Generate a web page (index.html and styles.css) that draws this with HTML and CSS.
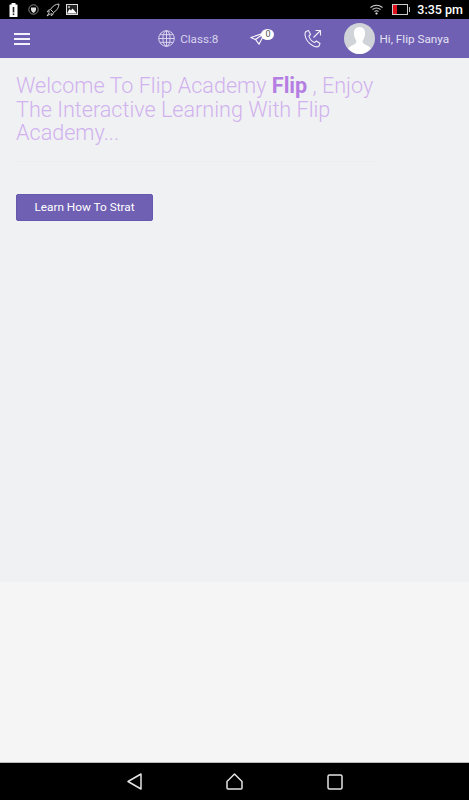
FILE: index.html
```html
<!DOCTYPE html>
<html lang="en">

<head>
    <meta charset="UTF-8">
    <meta name="viewport" content="width=device-width, initial-scale=1.0">
    <title>Flip Academy</title>
    <link rel="stylesheet" href="styles.css">
</head>

<body>
    <div class="app">
        <div class="status-bar">
            <div class="status-left">
                <svg class="status-icon" width="9" height="14" viewBox="0 0 9 14">
                    <rect x="2.5" y="0" width="4" height="2" fill="#fff" />
                    <rect x="0.5" y="1.5" width="8" height="12.5" rx="0.5" fill="#fff" />
                    <rect x="3.7" y="4" width="1.6" height="5.5" fill="#222" />
                    <rect x="3.7" y="10.5" width="1.6" height="1.6" fill="#222" />
                </svg>
                <svg class="status-icon icon-shield" width="11" height="11" viewBox="0 0 11 11">
                    <circle cx="5.5" cy="5.5" r="4.7" fill="none" stroke="#888" stroke-width="1" />
                    <path d="M3 3.5 H8 V6 Q7.5 8 5.5 9 Q3.5 8 3 6 Z" fill="#ddd" />
                </svg>
                <svg class="status-icon icon-rocket" width="14" height="14" viewBox="0 0 14 14">
                    <path d="M13 1 C9.5 1.2 6.5 3 4.5 6.5 L7.5 9.5 C11 7.5 12.8 4.5 13 1 Z M4.5 6.5 L2 7.5 L1.5 9 L4 8.8 M7.5 9.5 L6.5 12 L5 12.5 L5.2 10 M3 10 L1 13 L4 11" fill="none" stroke="#ccc" stroke-width="1" />
                </svg>
                <svg class="status-icon icon-image" width="12" height="11" viewBox="0 0 12 11">
                    <rect x="0.5" y="0.5" width="11" height="10" fill="#222" stroke="#ddd" stroke-width="1" />
                    <path d="M1 9.5 L3.5 5 L5 6.5 L6.5 4.5 L11 9.5 Z" fill="#fff" />
                    <circle cx="3" cy="3" r="1" fill="#ccc" />
                </svg>
            </div>
            <div class="status-right">
                <svg width="13" height="11" viewBox="0 0 13 11">
                    <path d="M0.5 3.5 Q6.5 -1 12.5 3.5 M2.5 5.5 Q6.5 2.5 10.5 5.5 M4.5 7.5 Q6.5 6 8.5 7.5" fill="none" stroke="#d4d4d4" stroke-width="1.1" />
                    <circle cx="6.5" cy="9.5" r="1.1" fill="#eee" />
                </svg>
                <div class="battery">
                    <div class="battery-level"></div>
                </div>
                <span class="clock">3:35 pm</span>
            </div>
        </div>

        <div class="topbar">
            <div class="menu-btn">
                <span></span>
                <span></span>
                <span></span>
            </div>
            <div class="topbar-right">
                <div class="class-item">
                    <svg width="17" height="17" viewBox="0 0 17 17" fill="none" stroke="#d9d4ee" stroke-width="1">
                        <circle cx="8.5" cy="8.5" r="7.8" />
                        <ellipse cx="8.5" cy="8.5" rx="3.6" ry="7.8" />
                        <path d="M8.5 0.7 V16.3 M0.7 8.5 H16.3 M1.8 4.7 H15.2 M1.8 12.3 H15.2" />
                    </svg>
                    <span>Class:8</span>
                </div>
                <div class="send-item">
                    <svg width="16" height="13" viewBox="0 0 16 13" fill="none" stroke="#fff" stroke-width="1.1" stroke-linejoin="round">
                        <path d="M15 0.8 L0.8 5.5 L5.5 7.5 L9 12.2 Z M5.5 7.5 L15 0.8" />
                    </svg>
                    <span class="badge">0</span>
                </div>
                <svg class="call-icon" width="18" height="19" viewBox="0 0 18 19" fill="none" stroke="#f1effa" stroke-width="1.1" stroke-linejoin="round">
                    <path d="M2 2.5 L4.5 1.5 L6.5 5.5 L5 7 C5.5 9.5 8 12.5 10.5 13.5 L12.5 12 L16 14.5 L15 17 C13.5 18.2 11 18 8.5 16.5 C4.5 14 1.5 9.5 1 6 C0.9 4.5 1.2 3.3 2 2.5 Z" />
                    <path d="M9.5 8.5 L16.5 1.5 M11.5 1.5 H16.5 V6.5" />
                </svg>
                <div class="user-item">
                    <div class="avatar">
                        <svg width="31" height="31" viewBox="0 0 31 31">
                            <circle cx="15.5" cy="15.5" r="15.5" fill="#d0d3d8" />
                            <path d="M15.5 4 C19.5 4 21.5 7 21 11.5 C20.7 14.5 19.5 16.5 18.5 18 C18.5 20 20 21 23 22.5 C25 23.5 26 24.5 27 25.5 C24 29 20 31 15.5 31 C11 31 7 29 4 25.5 C5 24.5 6 23.5 8 22.5 C11 21 12.5 20 12.5 18 C11.5 16.5 10.3 14.5 10 11.5 C9.5 7 11.5 4 15.5 4 Z" fill="#fff" />
                        </svg>
                    </div>
                    <span>Hi, Flip Sanya</span>
                </div>
            </div>
        </div>

        <div class="content">
            <div class="welcome">
                <h2>Welcome To Flip Academy <b>Flip</b> , Enjoy The Interactive Learning With Flip Academy...</h2>
                <hr>
                <button class="button">Learn How To Strat</button>
            </div>
        </div>
        <div class="footer-space"></div>

        <div class="bottom-nav">
            <svg width="15" height="17" viewBox="0 0 15 17" fill="none" stroke="#e4e4e4" stroke-width="1.5" stroke-linejoin="round">
                <path d="M14 1 V16 L1 8.5 Z" />
            </svg>
            <svg width="17" height="17" viewBox="0 0 17 17" fill="none" stroke="#e4e4e4" stroke-width="1.5" stroke-linejoin="round">
                <path d="M8.5 1 L16 8.5 V15 Q16 16 15 16 H2 Q1 16 1 15 V8.5 Z" />
            </svg>
            <svg width="16" height="16" viewBox="0 0 16 16" fill="none" stroke="#e4e4e4" stroke-width="1.5">
                <rect x="1" y="1" width="14" height="14" rx="1.5" />
            </svg>
        </div>
    </div>
</body>

</html>
```

FILE: styles.css
```css
body,
html {
    margin: 0;
    padding: 0;
    font-family: Roboto, "Liberation Sans", sans-serif;
    height: 100%;
    overflow: hidden;
}

.app {
    display: flex;
    flex-direction: column;
    height: 800px;
    width: 469px;
    background-color: #f5f5f5;
}

.status-bar {
    display: flex;
    justify-content: space-between;
    align-items: center;
    flex: 0 0 19px;
    background-color: black;
    color: white;
}

.status-left {
    display: flex;
    align-items: center;
    padding-left: 9px;
}

.status-icon {
    display: block;
}

.icon-shield {
    margin-left: 10px;
}

.icon-rocket {
    margin-left: 7px;
}

.icon-image {
    margin-left: 6px;
}

.status-right {
    display: flex;
    align-items: center;
    padding-right: 6px;
}

.battery {
    position: relative;
    display: flex;
    width: 14px;
    height: 9px;
    margin-left: 9px;
    border: 1px solid #ccc;
}

.battery::after {
    content: "";
    position: absolute;
    right: -3px;
    top: 2px;
    width: 1px;
    height: 5px;
    background-color: #bbb;
}

.battery-level {
    width: 4px;
    background-color: #e0121c;
}

.clock {
    margin-left: 9px;
    font-size: 12.5px;
    font-weight: 500;
}

.topbar {
    display: flex;
    justify-content: space-between;
    align-items: center;
    flex: 0 0 39px;
    background-color: #6f60b3;
    color: #e4e0f3;
    font-size: 11.7px;
}

.menu-btn {
    display: flex;
    flex-direction: column;
    gap: 3px;
    margin-left: 14px;
}

.menu-btn span {
    display: block;
    width: 16px;
    height: 2px;
    background-color: #f3f1fb;
}

.topbar-right {
    display: flex;
    align-items: center;
    padding-right: 20px;
}

.class-item {
    display: flex;
    align-items: center;
    gap: 5px;
    color: #d9d4ee;
    font-size: 11.7px;
}

.send-item {
    display: flex;
    margin-left: 32px;
    margin-right: 38px;
    position: relative;
}

.badge {
    position: absolute;
    top: -3px;
    left: 11px;
    width: 13px;
    height: 11px;
    border-radius: 50%;
    background-color: white;
    color: #555;
    font-size: 9px;
    line-height: 11px;
    text-align: center;
}

.call-icon {
    margin-right: 22px;
}

.user-item {
    display: flex;
    align-items: center;
    gap: 4px;
}

.avatar {
    display: flex;
}

.content {
    flex: 0 0 524px;
    background-color: #f0f1f3;
}

.welcome {
    padding: 16px 93px 0 16px;
}

.welcome h2 {
    margin: 0;
    font-size: 21.6px;
    font-weight: 300;
    line-height: 23.5px;
    color: #d0b2ee;
}

.welcome b {
    font-weight: 700;
    color: #b57fe2;
}

.welcome hr {
    margin: 16px 0 32px;
    border: none;
    border-top: 1px solid #edeef0;
}

.button {
    display: block;
    width: 137px;
    height: 27px;
    padding: 0;
    border: 1px solid #6558ae;
    border-radius: 2px;
    background-color: #6f60b3;
    color: white;
    font-family: inherit;
    font-size: 11.8px;
    cursor: pointer;
}

.footer-space {
    flex: 1;
}

.bottom-nav {
    display: flex;
    justify-content: center;
    align-items: center;
    gap: 84px;
    flex: 0 0 38px;
    background-color: black;
    border-top: 1px solid #bbb;
    box-sizing: border-box;
}
```
